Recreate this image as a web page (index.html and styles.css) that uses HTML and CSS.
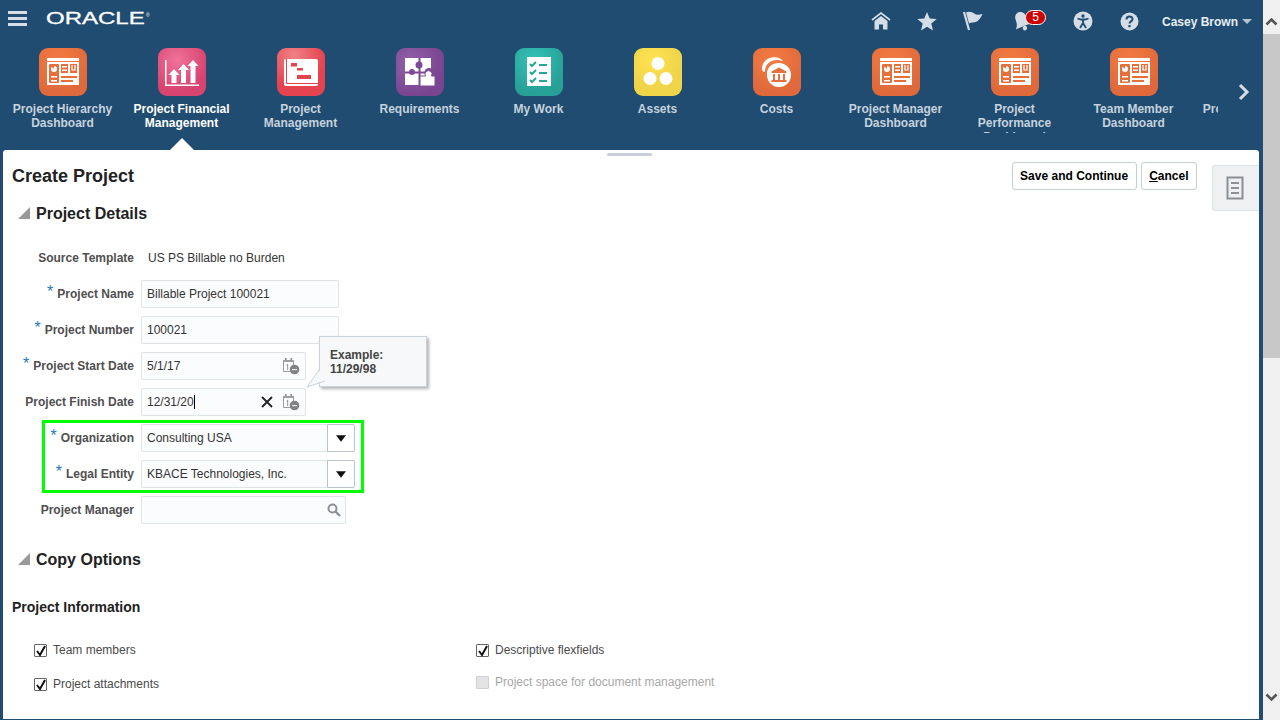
FILE: index.html
```html
<!DOCTYPE html>
<html lang="en">
<head>
    <meta charset="UTF-8">
    <title>Create Project</title>
    <link rel="stylesheet" href="styles.css">
</head>
<body>

    <!-- shared icons -->
    <svg class="defs" width="0" height="0">
        <symbol id="dash" viewBox="0 0 48 48">
            <rect x="8" y="10" width="32" height="3" fill="#fff"/>
            <rect x="8" y="14" width="32" height="23" fill="#fff"/>
            <rect x="10" y="16" width="10" height="19" rx="1" fill="#e5703c"/>
            <circle cx="15" cy="21" r="3" fill="#fff"/>
            <path d="M15 21V18H12z" fill="#e5703c"/>
            <rect x="12" y="28" width="6" height="1.5" fill="#fff"/>
            <rect x="12" y="32" width="6" height="1.5" fill="#fff"/>
            <rect x="22" y="16" width="7" height="9" fill="#e5703c"/>
            <rect x="23" y="18" width="5" height="1.5" fill="#fff"/>
            <rect x="23" y="21.5" width="5" height="1.5" fill="#fff"/>
            <rect x="31" y="16" width="7" height="9" fill="#e5703c"/>
            <path d="M33 17v5h3v-5" fill="none" stroke="#fff" stroke-width="1.2"/>
            <rect x="22" y="28" width="16" height="2" fill="#e5703c"/>
            <rect x="22" y="32" width="12" height="2" fill="#e5703c"/>
        </symbol>
        <symbol id="cal" viewBox="0 0 18 18">
            <path d="M1.500 3.500h10v11h-10z" fill="#fff" stroke="#9a9fa3"/>
            <rect x="3" y="1" width="1.6" height="3.5" fill="#8b9094"/>
            <rect x="8.500" y="1" width="1.6" height="3.5" fill="#8b9094"/>
            <rect x="1" y="3" width="11" height="2" fill="#9a9fa3"/>
            <path d="M4.500 8l1.200-.8v5.800" fill="none" stroke="#8b9094"/>
            <circle cx="12.500" cy="12.500" r="4.800" fill="#7f8488"/>
            <rect x="10" y="12" width="5" height="1.2" fill="#e8e8e8"/>
        </symbol>
        <symbol id="caret" viewBox="0 0 12 8">
            <path d="M0 0h12L6 8z" fill="#111"/>
        </symbol>
        <symbol id="arrow" viewBox="0 0 12 12">
            <path d="M12 0v12H0z" fill="#999"/>
        </symbol>
        <symbol id="check" viewBox="0 0 14 14">
            <path d="M3 7l3 4 5-9" fill="none" stroke="#111" stroke-width="2"/>
        </symbol>
    </svg>

    <div class="app">
        <div class="main">

            <!-- Top bar -->
            <header class="topbar">
                <div class="burger"><span></span><span></span><span></span></div>
                <div class="logo"><span class="logo-word">ORACLE</span><span class="logo-reg">®</span></div>

                <nav class="nav-icons">
                    <span class="nav-icon">
                        <svg width="20" height="18" viewBox="0 0 20 18"><path d="M1 8L10 1l9 7" fill="none" stroke="#d5dde6" stroke-width="1.600"/><path d="M3.500 9L10 4l6.500 5v8.500h-4.500v-5H8v5H3.500z" fill="#d5dde6"/></svg>
                    </span>
                    <span class="nav-icon">
                        <svg width="20" height="19" viewBox="0 0 20 19"><path d="M10 0l2.700 6.500 7 .5-5.400 4.500 1.700 7L10 14.800 4 18.500l1.700-7L.3 7l7-.5z" fill="#d5dde6"/></svg>
                    </span>
                    <span class="nav-icon">
                        <svg width="20" height="20" viewBox="0 0 20 20"><path d="M1 1l5 18" stroke="#d5dde6" stroke-width="2.200"/><path d="M3 1.500C6 0 9 1 12 3c2 1.500 5 .5 7.500 0-1.500 3-3 6-5.500 7.500-3 1.500-6 .5-8 2z" fill="#d5dde6"/></svg>
                    </span>
                    <span class="nav-icon nav-bell">
                        <svg width="22" height="22" viewBox="0 0 20 20"><g transform="rotate(-22 10 10)"><path d="M10 1.500c3 0 5 2.500 5 5.500 0 4 1 6 3 8H2c2-2 3-4 3-8 0-3 2-5.500 5-5.500z" fill="#d5dde6"/><circle cx="10" cy="17" r="2" fill="#d5dde6"/></g></svg>
                        <span class="badge">5</span>
                    </span>
                    <span class="nav-icon">
                        <svg width="20" height="20" viewBox="0 0 20 20"><circle cx="10" cy="10" r="9.500" fill="#d5dde6"/><circle cx="10" cy="5" r="1.700" fill="#1f4c70"/><path d="M4.500 7.500L8 8.500h4l3.500-1M10 8.500v3.500M10 12l-3 5M10 12l3 5" fill="none" stroke="#1f4c70" stroke-width="1.800"/></svg>
                    </span>
                    <span class="nav-icon">
                        <svg width="19" height="19" viewBox="0 0 19 19"><circle cx="9.500" cy="9.500" r="9" fill="#d5dde6"/><path d="M6.500 7.500c0-4 6-4 6-.3 0 2-3 2.300-3 4.300" fill="none" stroke="#1f4c70" stroke-width="2"/><rect x="8.400" y="13" width="2.200" height="2.200" fill="#1f4c70"/></svg>
                    </span>
                </nav>

                <div class="user">Casey Brown<span class="user-caret"></span></div>
            </header>

            <!-- Springboard -->
            <div class="tiles">
                <div class="tile-strip">
                    <div class="tile">
                        <div class="tile-icon t-orange"><svg width="48" height="48"><use href="#dash"/></svg></div>
                        <div class="tile-label">Project Hierarchy Dashboard</div>
                    </div>
                    <div class="tile tile-on">
                        <div class="tile-icon t-pink">
                            <svg width="48" height="48" viewBox="0 0 48 48" fill="#fff">
                                <rect x="7" y="12" width="1.500" height="26"/>
                                <rect x="7" y="36.500" width="34" height="1.500"/>
                                <path d="M16 21l5.500 6H18.500v8h-5v-8H10.500z"/>
                                <path d="M25.500 16l5.500 6H28v13h-5V22H20z"/>
                                <path d="M35 12l5.500 6H37.500v17h-5V18H29.500z"/>
                            </svg>
                        </div>
                        <div class="tile-label">Project Financial Management</div>
                    </div>
                    <div class="tile">
                        <div class="tile-icon t-red">
                            <svg width="48" height="48" viewBox="0 0 48 48">
                                <rect x="7" y="11" width="34" height="27" rx="2" fill="#fff"/>
                                <path d="M9.500 11v24.500H41" fill="none" stroke="#e5434f" stroke-width="1"/>
                                <rect x="14" y="15" width="6" height="3.500" fill="#e5434f"/>
                                <rect x="20" y="20" width="6" height="2.500" fill="#e5434f"/>
                                <rect x="20" y="27" width="14" height="4" fill="#e5434f"/>
                            </svg>
                        </div>
                        <div class="tile-label">Project Management</div>
                    </div>
                    <div class="tile">
                        <div class="tile-icon t-purple">
                            <svg width="48" height="48" viewBox="0 0 48 48">
                                <rect x="9" y="10" width="26" height="27" fill="#fff"/>
                                <g fill="#7f4a95">
                                    <rect x="22.500" y="10" width="2" height="27"/>
                                    <rect x="9" y="23.500" width="26" height="2"/>
                                    <circle cx="23" cy="17" r="3.500"/>
                                    <circle cx="16" cy="24" r="3"/>
                                    <circle cx="33" cy="24.500" r="4.500"/>
                                </g>
                                <path d="M24 28h5.500a3.500 3.500 0 1 1 6 0H39v10H24z" fill="#fff" stroke="#7f4a95"/>
                            </svg>
                        </div>
                        <div class="tile-label">Requirements</div>
                    </div>
                    <div class="tile">
                        <div class="tile-icon t-teal">
                            <svg width="48" height="48" viewBox="0 0 48 48">
                                <rect x="12" y="9" width="24" height="29" fill="#fff"/>
                                <g fill="none" stroke="#26a69a" stroke-width="2">
                                    <path d="M15 16l2 2 4-4M15 24l2 2 4-4M15 32l2 2 4-4"/>
                                    <path d="M24 17h8M24 25h8M24 33h8"/>
                                </g>
                            </svg>
                        </div>
                        <div class="tile-label">My Work</div>
                    </div>
                    <div class="tile">
                        <div class="tile-icon t-yellow">
                            <svg width="48" height="48" viewBox="0 0 48 48" fill="#fff">
                                <circle cx="24" cy="15.500" r="6.500"/>
                                <circle cx="16" cy="30.500" r="6.500"/>
                                <circle cx="32" cy="30.500" r="6.500"/>
                            </svg>
                        </div>
                        <div class="tile-label">Assets</div>
                    </div>
                    <div class="tile">
                        <div class="tile-icon t-orange">
                            <svg width="48" height="48" viewBox="0 0 48 48" fill="#fff">
                                <path d="M9 21C9 12 17 8 24 9.500c3 .6 5 2 6 4-4-2.500-11-2-15 2-2 2-3 4.500-3 8-2 1-3-1-3-2.500z"/>
                                <path d="M14 26c0-6 4-10 9-10.500-3 2-5.500 5-5.500 10.500 0 3 1 5 2 7-3-1.500-5.500-4-5.500-7z"/>
                                <circle cx="26" cy="27" r="12"/>
                                <g fill="#e5703c">
                                    <path d="M26 19.500l7.500 4v1.500h-15v-1.500z"/>
                                    <rect x="20" y="26" width="2" height="6"/>
                                    <rect x="25" y="26" width="2" height="6"/>
                                    <rect x="30" y="26" width="2" height="6"/>
                                    <rect x="18.500" y="32" width="15" height="2"/>
                                </g>
                            </svg>
                        </div>
                        <div class="tile-label">Costs</div>
                    </div>
                    <div class="tile">
                        <div class="tile-icon t-orange"><svg width="48" height="48"><use href="#dash"/></svg></div>
                        <div class="tile-label">Project Manager Dashboard</div>
                    </div>
                    <div class="tile">
                        <div class="tile-icon t-orange"><svg width="48" height="48"><use href="#dash"/></svg></div>
                        <div class="tile-label">Project Performance Dashboard</div>
                    </div>
                    <div class="tile">
                        <div class="tile-icon t-orange"><svg width="48" height="48"><use href="#dash"/></svg></div>
                        <div class="tile-label">Team Member Dashboard</div>
                    </div>
                    <div class="tile">
                        <div class="tile-label tile-cut">Project Hierarchy</div>
                    </div>
                </div>
                <svg class="tiles-next" width="14" height="18" viewBox="0 0 14 18"><path d="M3 2l7 7-7 7" fill="none" stroke="#d5dde6" stroke-width="3"/></svg>
            </div>

            <!-- Page -->
            <main class="panel">
                <div class="handle"></div>

                <div class="title-row">
                    <h1>Create Project</h1>
                    <div class="actions">
                        <button class="btn">Save and Continue</button>
                        <button class="btn"><u>C</u>ancel</button>
                    </div>
                </div>

                <div class="side-tab">
                    <svg width="18" height="24" viewBox="0 0 18 24"><path d="M1.500 1.500h15v21h-15z" fill="none" stroke="#8b9094" stroke-width="2"/><path d="M5 7h8M5 12h8M5 17h8" stroke="#8b9094" stroke-width="2"/></svg>
                </div>

                <h2 class="section"><svg class="tri" width="12" height="12"><use href="#arrow"/></svg>Project Details</h2>

                <div class="form">
                    <div class="row">
                        <label class="lbl">Source Template</label>
                        <span class="value">US PS Billable no Burden</span>
                    </div>
                    <div class="row">
                        <label class="lbl"><i class="req">*</i>Project Name</label>
                        <div class="field w-name">Billable Project 100021</div>
                    </div>
                    <div class="row">
                        <label class="lbl"><i class="req">*</i>Project Number</label>
                        <div class="field w-name">100021</div>
                    </div>
                    <div class="row">
                        <label class="lbl"><i class="req">*</i>Project Start Date</label>
                        <div class="field w-date">5/1/17<svg class="cal" width="18" height="18"><use href="#cal"/></svg></div>
                    </div>
                    <div class="row">
                        <label class="lbl">Project Finish Date</label>
                        <div class="field w-date"><span class="typed">12/31/20</span>
                            <svg class="clear" width="12" height="12" viewBox="0 0 12 12"><path d="M1 1l10 10M11 1L1 11" stroke="#222" stroke-width="1.800"/></svg>
                            <svg class="cal" width="18" height="18"><use href="#cal"/></svg>
                        </div>
                    </div>
                    <div class="row">
                        <label class="lbl"><i class="req">*</i>Organization</label>
                        <div class="field w-select">Consulting USA<span class="drop"><svg width="10" height="7"><use href="#caret"/></svg></span></div>
                    </div>
                    <div class="row">
                        <label class="lbl"><i class="req">*</i>Legal Entity</label>
                        <div class="field w-select">KBACE Technologies, Inc.<span class="drop"><svg width="10" height="7"><use href="#caret"/></svg></span></div>
                    </div>
                    <div class="row">
                        <label class="lbl">Project Manager</label>
                        <div class="field w-search">
                            <svg class="search" width="14" height="14" viewBox="0 0 14 14"><circle cx="5.500" cy="5.500" r="4" fill="none" stroke="#8b9094" stroke-width="2"/><path d="M8.500 8.500l4.500 4.500" stroke="#8b9094" stroke-width="2.400"/></svg>
                        </div>
                    </div>
                </div>

                <h2 class="section section-copy"><svg class="tri" width="12" height="12"><use href="#arrow"/></svg>Copy Options</h2>

                <h3 class="subhead">Project Information</h3>

                <div class="checks">
                    <div class="check-col">
                        <div class="check"><span class="box"><svg width="14" height="14"><use href="#check"/></svg></span>Team members</div>
                        <div class="check"><span class="box"><svg width="14" height="14"><use href="#check"/></svg></span>Project attachments</div>
                    </div>
                    <div class="check-col check-col-2">
                        <div class="check"><span class="box"><svg width="14" height="14"><use href="#check"/></svg></span>Descriptive flexfields</div>
                        <div class="check check-off"><span class="box"></span>Project space for document management</div>
                    </div>
                </div>

                <!-- Tooltip de la fecha y marco verde -->
                <div class="tip">
                    <svg class="tip-tail" width="20" height="20" viewBox="0 0 20 20"><path d="M13 1L1 18l18-6" fill="#f7f8f9" stroke="#c9d2d8"/></svg>
                    <strong>Example:</strong><br><strong>11/29/98</strong>
                </div>
                <div class="highlight"></div>
            </main>
        </div>

        <!-- Barra de scroll -->
        <div class="scrollbar">
            <svg class="sb-up" width="13" height="9" viewBox="0 0 13 9"><path d="M1.500 7.500l5-5 5 5" fill="none" stroke="#555" stroke-width="2.600"/></svg>
            <div class="sb-thumb"></div>
            <svg class="sb-down" width="13" height="9" viewBox="0 0 13 9"><path d="M1.500 1.500l5 5 5-5" fill="none" stroke="#555" stroke-width="2.600"/></svg>
        </div>
    </div>

</body>
</html>
```

FILE: styles.css
```css
* {
    margin: 0;
    padding: 0;
    box-sizing: border-box;
}

body {
    font-family: "Liberation Sans", Arial, sans-serif;
    font-size: 12px;
    color: #333;
    overflow: hidden;
}

.defs {
    position: absolute;
}

.app {
    display: flex;
    height: 720px;
}

.main {
    flex: 1;
    display: flex;
    flex-direction: column;
    min-width: 0;
    background-color: #1f4c70;
}

/* Top bar */
.topbar {
    display: flex;
    align-items: center;
    height: 40px;
    padding: 2px 11px 0 8px;
    flex: none;
}

.burger {
    display: flex;
    flex-direction: column;
    gap: 3px;
    width: 19px;
    margin-top: -6px;
}

.burger span {
    height: 3px;
    background-color: #d5dde6;
}

.logo {
    display: flex;
    align-items: flex-start;
    margin-left: 19px;
    margin-top: -5px;
    width: 104px;
    color: #fff;
}

.logo-word {
    font-size: 16px;
    line-height: 16px;
    transform: scaleX(1.5);
    transform-origin: left center;
    width: 100px;
    -webkit-text-stroke: 0.3px #fff;
}

.logo-reg {
    font-size: 5px;
    line-height: 8px;
}

.nav-icons {
    display: flex;
    align-items: center;
    margin-left: auto;
}

.nav-icon {
    position: relative;
    display: flex;
    justify-content: center;
    width: 46px;
}

.nav-icon:last-child {
    width: 47px;
}

.nav-bell {
    width: 64px;
    justify-content: flex-start;
    padding-left: 15px;
}

.badge {
    position: absolute;
    left: 29px;
    top: 0;
    width: 21px;
    height: 15px;
    border: 1px solid #fff;
    border-radius: 8px;
    background-color: #c00;
    color: #fff;
    font-size: 12px;
    line-height: 13px;
    text-align: center;
}

.user {
    display: flex;
    align-items: center;
    margin-left: 9px;
    margin-top: 1px;
    color: #e8edf2;
    font-weight: bold;
}

.user-caret {
    width: 0;
    height: 0;
    margin-left: 4px;
    border-left: 5px solid transparent;
    border-right: 5px solid transparent;
    border-top: 5px solid #b8c5d1;
}

/* Springboard */
.tiles {
    position: relative;
    flex: none;
    height: 110px;
    padding: 8px 0 0 3px;
}

.tile-strip {
    display: flex;
    width: 1215px;
    height: 102px;
    overflow: hidden;
}

.tile {
    position: relative;
    flex: none;
    width: 119px;
    display: flex;
    flex-direction: column;
    align-items: center;
}

.tile-icon {
    width: 48px;
    height: 48px;
    border-radius: 9px;
    overflow: hidden;
}

.tile-icon svg {
    display: block;
}

.t-orange { background: radial-gradient(circle at 40% 25%, #f47c42, #df693a 70%); }
.t-pink { background: radial-gradient(circle at 40% 25%, #f07399, #d7446f 65%); }
.t-red { background: radial-gradient(circle at 35% 15%, #ee8285, #e5434f 60%); }
.t-purple { background: radial-gradient(circle at 30% 30%, #915fa8, #7a4590 70%); }
.t-teal { background: radial-gradient(circle at 40% 25%, #35c1b6, #27a096 70%); }
.t-yellow { background: radial-gradient(circle at 40% 25%, #ffe352, #efd348 65%); }

.tile-label {
    width: 106px;
    height: 31px;
    margin-top: 6px;
    overflow: hidden;
    color: #c6d2dd;
    font-weight: bold;
    line-height: 14px;
    text-align: center;
}

.tile-cut {
    margin-top: 54px;
}

.tile-on .tile-label {
    color: #fff;
}

.tile-on::after {
    content: "";
    position: absolute;
    left: 48px;
    top: 90px;
    border-left: 12px solid transparent;
    border-right: 12px solid transparent;
    border-bottom: 12px solid #fff;
}

.tiles-next {
    position: absolute;
    left: 1237px;
    top: 43px;
}

/* Page */
.panel {
    position: relative;
    flex: 1;
    margin: 0 4px 1px 3px;
    padding: 12px 62px 0 9px;
    background-color: #fff;
    border-radius: 3px 3px 0 0;
}

.handle {
    position: absolute;
    left: 604px;
    top: 3px;
    width: 45px;
    height: 3px;
    border-radius: 2px;
    background-color: #c9ced9;
}

.title-row {
    display: flex;
    justify-content: space-between;
    align-items: center;
    height: 28px;
}

h1 {
    font-size: 18px;
    color: #222;
}

.actions {
    display: flex;
    gap: 4px;
}

.btn {
    height: 28px;
    padding: 0 7.5px;
    border: 1px solid #c4ced7;
    border-radius: 3px;
    background-color: #fff;
    color: #000;
    font-family: inherit;
    font-size: 12px;
    font-weight: bold;
}

.side-tab {
    position: absolute;
    right: 0;
    top: 15px;
    width: 47px;
    height: 46px;
    display: flex;
    align-items: center;
    justify-content: center;
    padding-right: 2px;
    background-color: #eef0f2;
    border: 1px solid #dfe3e6;
    border-right: none;
    border-radius: 3px 0 0 3px;
}

.section {
    display: flex;
    align-items: center;
    height: 20px;
    margin-top: 14px;
    padding-left: 6px;
    font-size: 16px;
    color: #222;
}

.tri {
    margin-right: 6px;
    margin-top: -2px;
}

.form {
    margin-top: 16px;
    margin-left: -9px;
}

.row {
    display: flex;
    align-items: center;
    height: 36px;
}

.lbl {
    width: 131px;
    color: #4f4f4f;
    font-weight: bold;
    text-align: right;
}

.req {
    margin-right: 4px;
    color: #1f78c1;
    font-size: 16px;
    font-style: normal;
    font-weight: normal;
    line-height: 0;
    vertical-align: 1px;
}

.value {
    margin-left: 14px;
}

.field {
    position: relative;
    display: flex;
    align-items: center;
    height: 28px;
    margin-left: 7px;
    padding-left: 5px;
    background-color: #fbfcfd;
    border: 1px solid #dfe4e7;
    border-radius: 2px;
}

.w-name { width: 198px; }
.w-date { width: 165px; }
.w-select { width: 214px; }
.w-search { width: 205px; }

.cal {
    position: absolute;
    right: 5px;
    top: 4px;
}

.clear {
    position: absolute;
    right: 32px;
    top: 7px;
}

.typed {
    border-right: 1px solid #000;
}

.drop {
    position: absolute;
    right: -1px;
    top: -1px;
    width: 28px;
    height: 28px;
    display: flex;
    align-items: center;
    justify-content: center;
    background-color: #fff;
    border: 1px solid #b9c4cc;
    border-radius: 0 2px 2px 0;
}

.search {
    position: absolute;
    right: 4px;
    top: 6px;
}

.section-copy {
    margin-top: 22px;
}

.subhead {
    margin-top: 29px;
    font-size: 14px;
    color: #222;
}

.checks {
    display: flex;
    margin-top: 27px;
    padding-left: 22px;
}

.check-col {
    display: flex;
    flex-direction: column;
    gap: 18px;
    width: 442px;
}

.check-col-2 {
    gap: 16px;
}

.check {
    display: flex;
    align-items: center;
    height: 16px;
    color: #4a4a4a;
}

.box {
    width: 13px;
    height: 13px;
    margin-right: 6px;
    background-color: #fff;
    border: 1px solid #666;
    border-radius: 1px;
}

.box svg {
    display: block;
    margin: -1px;
}

.check-off {
    color: #a8a8a8;
}

.check-off .box {
    background-color: #e4e4e4;
    border-color: #cfcfcf;
}

/* Tooltip y marco */
.tip {
    position: absolute;
    left: 316px;
    top: 186px;
    width: 108px;
    height: 51px;
    padding: 11px 10px;
    background-color: #f7f8f9;
    border: 1px solid #c9d2d8;
    box-shadow: 2px 2px 3px rgba(0, 0, 0, 0.3);
    color: #444;
    line-height: 14px;
}

.tip-tail {
    position: absolute;
    left: -14px;
    top: 32px;
}

.highlight {
    position: absolute;
    left: 39px;
    top: 270px;
    width: 322px;
    height: 73px;
    border: 3px solid #0f0;
}

/* Scroll */
.scrollbar {
    position: relative;
    flex: none;
    width: 17px;
    background-color: #f0f0f0;
}

.sb-thumb {
    position: absolute;
    top: 34px;
    left: 0;
    width: 17px;
    height: 324px;
    background-color: #c8c8c8;
}

.sb-up {
    position: absolute;
    left: 2px;
    top: 17px;
}

.sb-down {
    position: absolute;
    left: 2px;
    top: 693px;
}
```
